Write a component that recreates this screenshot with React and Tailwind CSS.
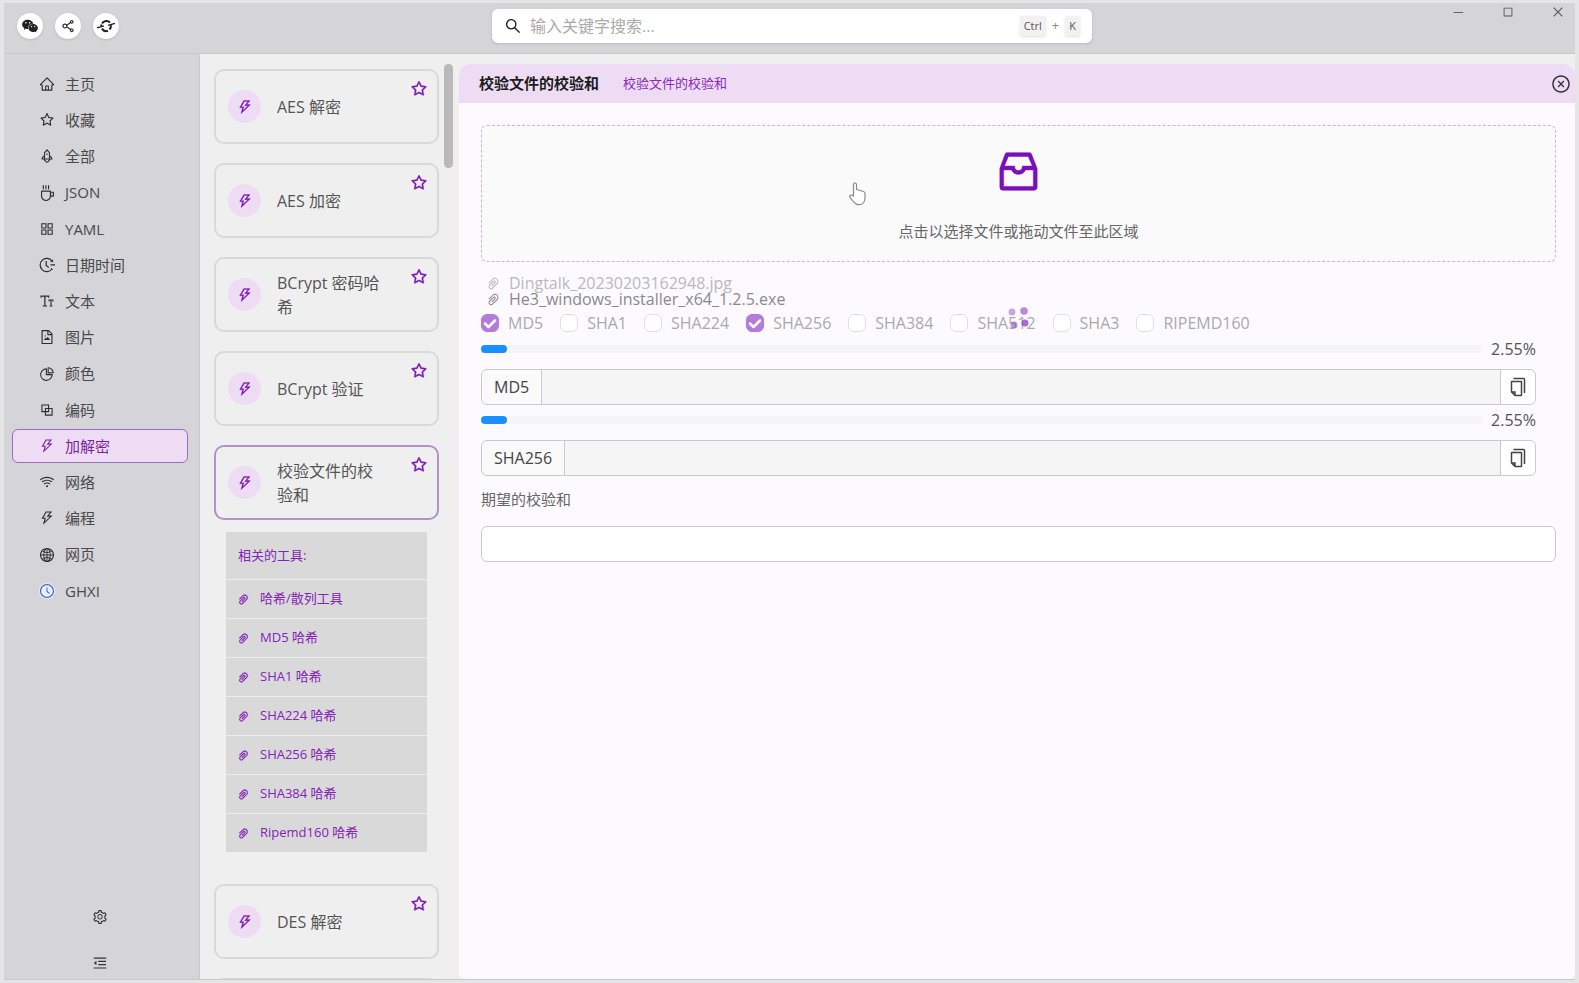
import { useState } from "react"
import {
  AiFillWechat,
  AiOutlineAppstore,
  AiOutlineBlock,
  AiOutlineClockCircle,
  AiOutlineCloseCircle,
  AiOutlineCoffee,
  AiOutlineFileImage,
  AiOutlineFontSize,
  AiOutlineGlobal,
  AiOutlineHome,
  AiOutlineInbox,
  AiOutlineMenuFold,
  AiOutlinePaperClip,
  AiOutlinePieChart,
  AiOutlineRocket,
  AiOutlineSearch,
  AiOutlineSetting,
  AiOutlineShareAlt,
  AiOutlineStar,
  AiOutlineThunderbolt,
  AiOutlineWifi,
} from "react-icons/ai"
import { VscChromeClose, VscChromeMaximize, VscChromeMinimize } from "react-icons/vsc"

const menu = [
  { label: "主页", icon: AiOutlineHome },
  { label: "收藏", icon: AiOutlineStar },
  { label: "全部", icon: AiOutlineRocket },
  { label: "JSON", icon: AiOutlineCoffee },
  { label: "YAML", icon: AiOutlineAppstore },
  { label: "日期时间", icon: DateTimeIcon },
  { label: "文本", icon: AiOutlineFontSize },
  { label: "图片", icon: AiOutlineFileImage },
  { label: "颜色", icon: AiOutlinePieChart },
  { label: "编码", icon: AiOutlineBlock },
  { label: "加解密", icon: AiOutlineThunderbolt },
  { label: "网络", icon: AiOutlineWifi },
  { label: "编程", icon: AiOutlineThunderbolt },
  { label: "网页", icon: AiOutlineGlobal },
  { label: "GHXI", icon: AiOutlineClockCircle, iconClass: "rounded-full bg-[#e6f0fe] text-[#4a63c4]" },
]

const related = ["哈希/散列工具", "MD5 哈希", "SHA1 哈希", "SHA224 哈希", "SHA256 哈希", "SHA384 哈希", "Ripemd160 哈希"]

const algorithms = ["MD5", "SHA1", "SHA224", "SHA256", "SHA384", "SHA512", "SHA3", "RIPEMD160"]

function DateTimeIcon({ className }) {
  return (
    <svg viewBox="0 0 16 16" className={className} fill="none" stroke="currentColor" strokeWidth="1.2">
      <path d="M13 4A6.6 6.6 0 1 0 13 12" />
      <path d="M7.2 4v4.400l2.600 2M11.500 7.800H16" />
      <path d="M11.600 4.600 13.600 4.800 13.600 2.800M12 11l1.500 1.500" strokeWidth="1" />
    </svg>
  )
}

function PlanetIcon() {
  return (
    <svg viewBox="0 0 20 20" className="size-5" fill="none" stroke="currentColor">
      <path d="M6 7.5a5 5 0 0 1 8-1M14.8 9a5 5 0 0 1-1.3 4.5M12 14.8a5 5 0 0 1-6-2.3M5.2 10.5a5 5 0 0 1 .3-2" strokeWidth="2" />
      <path d="M1 11.8 8 9.8M12 9.3l7-2" strokeWidth="1.4" />
    </svg>
  )
}

function CopyIcon() {
  return (
    <svg viewBox="0 0 18 20" className="h-5 w-[18px]" fill="none" stroke="currentColor" strokeWidth="1.5">
      <path d="M4.5 1.5h10a1 1 0 0 1 1 1V16" />
      <path d="M3 4.5h9a.5.5 0 0 1 .5.5v13a.5.5 0 0 1-.5.5H6L2.5 15V5a.5.5 0 0 1 .5-.5ZM2.5 15H6v3.5" />
    </svg>
  )
}

function TitleBar() {
  return (
    <header className="grid h-[51px] shrink-0 grid-cols-[1fr_600px_1fr] border-b border-[#c9c9cb] bg-[#d5d5d7] pl-[5px]">
      <div className="flex items-center gap-3 pb-1 pl-2">
        <button aria-label="微信" className="flex size-[26px] items-center justify-center rounded-full bg-white text-[#222] shadow">
          <AiFillWechat className="size-[18px]" />
        </button>
        <button aria-label="分享" className="flex size-[26px] items-center justify-center rounded-full bg-white text-[#222] shadow">
          <AiOutlineShareAlt className="size-4" />
        </button>
        <button aria-label="浏览器" className="flex size-[26px] items-center justify-center rounded-full bg-white text-[#222] shadow">
          <PlanetIcon />
        </button>
      </div>
      <label className="mt-[6px] flex h-[34px] items-center rounded-md bg-white px-3 shadow">
        <AiOutlineSearch className="size-[18px] shrink-0 text-[#222]" />
        <input
          type="text"
          aria-label="搜索"
          placeholder="输入关键字搜索..."
          className="ml-2 min-w-0 flex-1 bg-transparent text-base text-[#333] outline-none placeholder:text-[#aaa]"
        />
        <kbd className="rounded-xs bg-[#f1f1f1] px-1 font-[inherit] text-[11px] leading-5 text-[#555] shadow">Ctrl</kbd>
        <span className="mx-[6px] text-[13px] text-[#888]">+</span>
        <kbd className="rounded-xs bg-[#f1f1f1] px-1 font-[inherit] text-[11px] leading-5 text-[#555] shadow">K</kbd>
      </label>
      <div className="flex items-start justify-end gap-9 pt-[2px] pr-[10px] text-[#555]">
        <button aria-label="最小化"><VscChromeMinimize className="size-[14px]" /></button>
        <button aria-label="最大化"><VscChromeMaximize className="size-[14px]" /></button>
        <button aria-label="关闭"><VscChromeClose className="size-[14px]" /></button>
      </div>
    </header>
  )
}

function Sidebar({ active, onSelect }) {
  return (
    <aside className="flex w-[196px] shrink-0 flex-col border-r border-[#c9c9cb] bg-[#d5d4d9] px-2 pt-[13px] text-[15px] text-[#4a4a4a]">
      <nav className="flex h-[541px] shrink-0 flex-col justify-between">
        {menu.map(({ label, icon: Icon, iconClass }) => (
          <button
            key={label}
            onClick={() => onSelect(label)}
            className={`flex h-[34px] w-[176px] items-center gap-[10px] rounded-md border pl-[26px] ${
              active === label ? "border-[#a06ac4] bg-[#eedcf5] text-[#7b1fa2]" : "border-transparent"
            }`}
          >
            <Icon className={`size-4 ${iconClass || (active === label ? "" : "text-[#2c2c2c]")}`} />
            {label}
          </button>
        ))}
      </nav>
      <div className="mt-auto flex flex-col items-center gap-[30px] pr-1 pb-2 text-[#333]">
        <button aria-label="设置"><AiOutlineSetting className="size-4" /></button>
        <button aria-label="收起菜单"><AiOutlineMenuFold className="size-4" /></button>
      </div>
    </aside>
  )
}

function ToolCard({ title, selected }) {
  return (
    <article
      className={`relative flex h-[75px] shrink-0 items-center gap-4 rounded-[10px] border-2 pr-10 pl-3 ${
        selected ? "border-[#b48fcb]" : "border-[#d9d9d9]"
      }`}
    >
      <span className="flex size-[33px] shrink-0 items-center justify-center rounded-full bg-[#eedcf5] text-[#7b16b5]">
        <AiOutlineThunderbolt className="size-4" strokeWidth="20" />
      </span>
      <h3 className="w-[106px] text-base leading-6 text-[#555]">{title}</h3>
      <button aria-label="收藏" className="absolute top-[9px] right-[9px] text-[#7b16b5]">
        <AiOutlineStar className="size-[18px]" strokeWidth="20" />
      </button>
    </article>
  )
}

function ToolList() {
  return (
    <section className="flex w-[259px] shrink-0 justify-between overflow-hidden pt-[10px] pr-[6px] pl-[14px]">
      <div className="flex w-[225px] flex-col gap-[19px] pt-[5px]">
        <ToolCard title="AES 解密" />
        <ToolCard title="AES 加密" />
        <ToolCard title="BCrypt 密码哈希" />
        <ToolCard title="BCrypt 验证" />
        <div className="mb-[13px]">
          <ToolCard title="校验文件的校验和" selected />
          <div className="mx-3 mt-3 bg-[#d9d9d9] text-[13px] text-[#8423b8]">
            <h4 className="px-3 leading-[47px]">相关的工具:</h4>
            <ul>
              {related.map((name) => (
                <li key={name} className="border-t border-[#ededed]">
                  <a href="#" className="flex h-[38px] items-center gap-[10px] px-[11px]">
                    <AiOutlinePaperClip className="size-[13px]" strokeWidth="20" />
                    {name}
                  </a>
                </li>
              ))}
            </ul>
          </div>
        </div>
        <ToolCard title="DES 解密" />
        <div className="h-[75px] shrink-0 rounded-[10px] border-2 border-[#d9d9d9]" />
      </div>
      <div className="h-[104px] w-[9px] rounded-full bg-[#b9b9b9]" />
    </section>
  )
}

function HashRow({ name, percent }) {
  const id = `result-${name}`
  return (
    <div className="mr-5">
      <div className="flex h-[22px] items-center gap-2">
        <div className="h-2 flex-1 rounded-full bg-[#f5f4f6]">
          <div className="h-2 rounded-full bg-[#1890ff]" style={{ width: `${percent}%` }} />
        </div>
        <span className="w-[46px] text-right text-base leading-[22px] text-[#555]">{percent}%</span>
      </div>
      <div className="mt-[9px] mb-1 flex h-9 rounded-md border border-[#cbc9cd] bg-[#fafafa] text-base text-[#444]">
        <label htmlFor={id} className="flex items-center border-r border-[#cbc9cd] px-3">{name}</label>
        <input id={id} readOnly className="min-w-0 flex-1 bg-[#f5f5f5] outline-none" />
        <button aria-label="复制" className="flex w-[35px] items-center justify-center rounded-r-md border-l border-[#cbc9cd] bg-white">
          <CopyIcon />
        </button>
      </div>
    </div>
  )
}

function LoadingDots() {
  return (
    <svg viewBox="0 0 22 22" className="absolute top-[-3px] left-1/2 size-[22px] -translate-x-1/2" fill="#8e3fc0">
      <circle cx="4" cy="5" r="3.5" opacity=".45" />
      <circle cx="16" cy="4" r="3.8" opacity=".6" />
      <circle cx="17" cy="16" r="3.5" opacity=".75" />
      <circle cx="6" cy="18" r="3.5" opacity=".55" />
    </svg>
  )
}

function ChecksumPanel() {
  const [checked, setChecked] = useState(["MD5", "SHA256"])

  const toggle = (name) => {
    setChecked((prev) => (prev.includes(name) ? prev.filter((n) => n !== name) : [...prev, name]))
  }

  return (
    <main className="flex min-w-0 flex-1 flex-col pt-[10px]">
      <div className="flex flex-1 flex-col overflow-hidden rounded-t-xl rounded-b-md bg-[#fcfaff]">
        <div className="flex h-[39px] items-center bg-[#eedcf5] pr-[4px] pl-5">
          <h1 className="text-[15px] font-bold text-[#1c1c1c]">校验文件的校验和</h1>
          <a href="#" className="ml-6 text-[13px] text-[#8a2bb8]">校验文件的校验和</a>
          <button aria-label="关闭工具" className="ml-auto text-[#333]">
            <AiOutlineCloseCircle className="size-5" />
          </button>
        </div>
        <div className="flex flex-col pt-[22px] pr-[19px] pl-[22px]">
          <button className="flex h-[137px] flex-col items-center rounded-md border border-dashed border-[#cdb2dc] bg-[#fafafa]">
            <AiOutlineInbox className="mt-5 size-[51px] text-[#7b0fb8]" strokeWidth="10" />
            <span className="mt-[22px] text-[15px] leading-6 text-[#666]">点击以选择文件或拖动文件至此区域</span>
          </button>
          <ul className="mt-[13px] text-base leading-4">
            <li className="flex h-4 items-center gap-2 pl-[5px] text-[#b9b9b9]">
              <AiOutlinePaperClip className="size-[15px]" />
              Dingtalk_20230203162948.jpg
            </li>
            <li className="flex h-4 items-center gap-2 pl-[5px] text-[#8a8a8a]">
              <AiOutlinePaperClip className="size-[15px]" />
              He3_windows_installer_x64_1.2.5.exe
            </li>
          </ul>
          <div className="relative mt-[3px] flex h-[26px] items-center gap-[17px] text-base text-[#aaa]">
            {algorithms.map((name) => (
              <label key={name} className="flex items-center gap-[9px]">
                <span className="relative flex size-[18px]">
                  <input
                    type="checkbox"
                    checked={checked.includes(name)}
                    onChange={() => toggle(name)}
                    className="peer size-[18px] appearance-none rounded-md border border-[#e0dee2] bg-white checked:border-[#b57bd8] checked:bg-[#b57bd8]"
                  />
                  <svg
                    viewBox="0 0 18 18"
                    className="pointer-events-none absolute inset-0 hidden peer-checked:block"
                    fill="none"
                    stroke="#fff"
                    strokeWidth="2.5"
                    strokeLinecap="round"
                    strokeLinejoin="round"
                  >
                    <path d="m4 9.5 3.5 3.5L14 6.5" />
                  </svg>
                </span>
                {name}
              </label>
            ))}
            <LoadingDots />
          </div>
          <div className="mt-[2px]">
            <HashRow name="MD5" percent={2.55} />
            <HashRow name="SHA256" percent={2.55} />
          </div>
          <label htmlFor="expected" className="mt-[7px] text-[15px] leading-6 text-[#666]">期望的校验和</label>
          <input id="expected" className="mt-[15px] h-9 rounded-md border border-[#cbc9cd] bg-white px-3 text-base outline-none" />
        </div>
      </div>
    </main>
  )
}

function HandCursor() {
  return (
    <svg viewBox="0 0 18 26" className="pointer-events-none absolute top-[181px] left-[848px] h-[26px] w-[18px]" fill="#fff" stroke="#8a8a8a" strokeWidth="1.2" strokeLinejoin="round">
      <path d="M5.5 15V3q1.5-2 3 0v5.5l7 2q1.5.5 1.5 2.5v5q-.5 3.5-3 5-4 1.5-6.5-.5Q3.5 19 1.5 15.5 2.500 13 5.5 15Z" />
    </svg>
  )
}

export default function App() {
  const [active, setActive] = useState("加解密")

  return (
    <div className="relative flex h-screen flex-col bg-[#e6e5e6] px-1 py-[3px] font-['Open_Sans','Noto_Sans_CJK_SC',sans-serif]">
      <TitleBar />
      <div className="flex min-h-0 flex-1 border-b border-[#c9c9cb] bg-[#efeff0]">
        <Sidebar active={active} onSelect={setActive} />
        <ToolList />
        <ChecksumPanel />
      </div>
      <HandCursor />
    </div>
  )
}
